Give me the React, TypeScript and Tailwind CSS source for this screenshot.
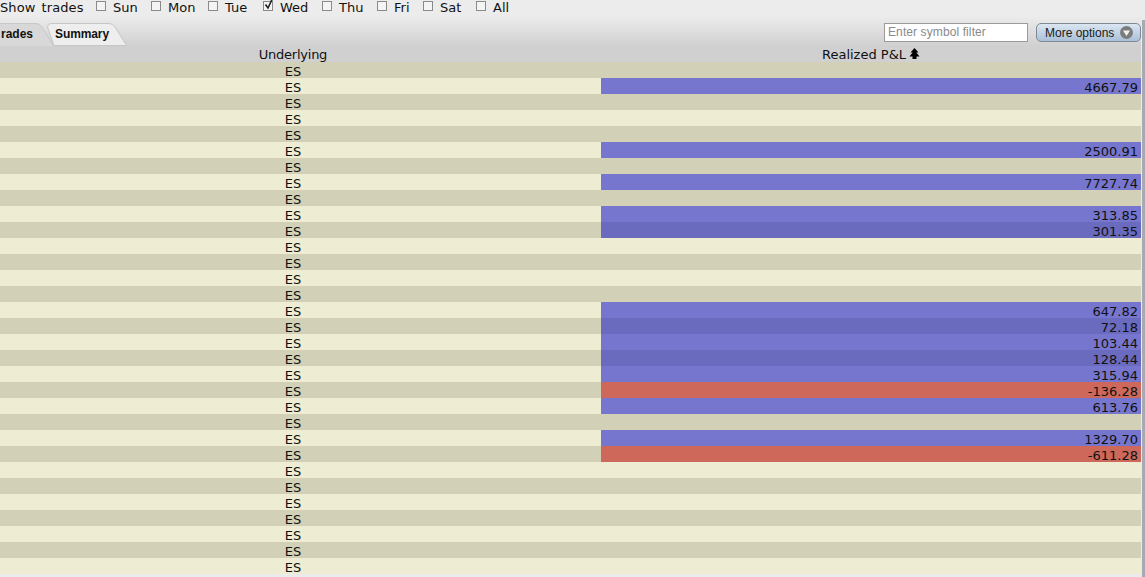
const rows: (string | null)[] = [
  null, "4667.79", null, null, null, "2500.91", null, "7727.74", null, "313.85", "301.35",
  null, null, null, null, "647.82", "72.18", "103.44", "128.44", "315.94", "-136.28", "613.76",
  null, "1329.70", "-611.28", null, null, null, null, null, null, null,
];
const days = [
  { d: "Sun", w: "w-[55px]" }, { d: "Mon", w: "w-[57px]" }, { d: "Tue", w: "w-[55px]" }, { d: "Wed", w: "w-[59px]" },
  { d: "Thu", w: "w-[55px]" }, { d: "Fri", w: "w-[46px]" }, { d: "Sat", w: "w-[53px]" }, { d: "All", w: "w-[40px]" },
];

function Box({ checked }: { checked: boolean }) {
  return (
    <span className="relative block w-[10px] h-[10px] border border-[#8a8a8a] bg-[#f4f4f4] mr-[7px] mb-[3px]">
      {checked && (
        <svg className="absolute left-0 top-[-4px]" width="10" height="12" viewBox="0 0 10 12">
          <path d="M1.5 6.5 L4 10 L8.5 0.5" fill="none" stroke="#222" strokeWidth="1.6" />
        </svg>
      )}
    </span>
  );
}

export default function App() {
  return (
    <div className="w-[1145px] h-[577px] overflow-hidden bg-[#ebebeb] text-[13px] text-[#111] font-['DejaVu_Sans',Verdana,sans-serif] relative">
      <div className="h-[62px] bg-[linear-gradient(#ececec_0px,#ececec_16px,#d0d0d0_46px,#d0d0d0_62px)] w-[1141px]">
        <div className="h-[15px] flex items-center leading-[15px]">
          <span className="w-[96px] whitespace-pre tracking-[0.1px]">
            <span>Show</span>
            <span className="ml-[6px]">trades</span>
          </span>
          {days.map((x) => (
            <span key={x.d} className={`flex items-center ${x.w}`}>
              <Box checked={x.d === "Wed"} />
              <span>{x.d}</span>
            </span>
          ))}
        </div>
        <div className="h-[23px] mt-[8px] flex items-start">
          <div className="relative w-[130px] h-[23px] shrink-0">
            <svg width="130" height="23" viewBox="0 0 130 23" className="block">
              <path d="M-4 0.5 L36 0.5 Q40 0.5 42 4 L53.5 23 L-4 23 Z" fill="#d8d8d8" stroke="none" />
              <path d="M-4 0.5 L36 0.5 Q40 0.5 42 4 L53.5 22.5" fill="none" stroke="#c8c8c8" />
              <path d="M47.5 4 Q47.5 0.5 51 0.5 L109 0.5 Q113 0.5 115 4 L126.5 22.5 L54 22.5 Z" fill="#eeeeee" stroke="#c6c6c6" />
            </svg>
            <span className="absolute left-[1px] top-[2px] font-['Liberation_Sans',Arial,sans-serif] font-bold text-[12px]">rades</span>
            <span className="absolute left-[55px] top-[2px] font-['Liberation_Sans',Arial,sans-serif] font-bold text-[12px] tracking-[-0.1px]">Summary</span>
          </div>
          <div className="flex-1" />
          <div className="w-[144px] h-[19px] bg-white border border-[#9a9a9a] pl-[3px] text-[12px] leading-[17px] tracking-[0.1px] text-[#8a8a8a] font-['Liberation_Sans',Arial,sans-serif]">
            Enter symbol filter
          </div>
          <div className="ml-[8px] w-[105px] h-[19px] rounded-[5px] border border-[#7f8a96] bg-[linear-gradient(#dbe6f1,#a9c0d8)] flex items-center pl-[8px] gap-[6px] text-[12px] font-['Liberation_Sans',Arial,sans-serif] text-[#1a1a1a]">
            <span>More options</span>
            <svg width="13" height="13" viewBox="0 0 13 13">
              <circle cx="6.5" cy="6.5" r="6.5" fill="#7c7c7c" />
              <path d="M3 4.5 L10 4.5 L6.5 10 Z" fill="#f2f2f2" />
            </svg>
          </div>
        </div>
        <div className="h-[16px] flex leading-[18px]">
          <div className="w-[586px] text-center tracking-[-0.25px]">Underlying</div>
          <div className="w-[15px]" />
          <div className="w-[540px] flex justify-center items-center gap-[3px]">
            <span className="pt-[2px]">Realized P&amp;L</span>
            <svg width="11" height="12" viewBox="0 0 11 12">
              <path d="M5.5 0 L9.5 4.5 L7.3 4.5 L10.5 8.5 L7.5 8.5 L7.5 11 L3.5 11 L3.5 8.5 L0.5 8.5 L3.7 4.5 L1.5 4.5 Z" fill="#000" />
            </svg>
          </div>
        </div>
      </div>
      <div className="w-[1141px]">
        {rows.map((v, i) => {
          const even = i % 2 === 0;
          const neg = v !== null && v.startsWith("-");
          const cell = v === null ? "" : neg ? "bg-[#ce685b]" : even ? "bg-[#6a6abf]" : "bg-[#7676ce]";
          return (
            <div key={i} className={`flex h-[16px] leading-[20px] ${even ? "bg-[#d2d1b7]" : "bg-[#eeedd3]"}`}>
              <div className="w-[586px] text-center">ES</div>
              <div className="w-[15px]" />
              <div className={`w-[540px] h-[16px] text-right pr-[3px] ${cell}`}>{v}</div>
            </div>
          );
        })}
      </div>
      <div className="absolute right-0 top-[20px] bottom-0 w-[3px] bg-[#a9a9b3]" />
    </div>
  );
}
